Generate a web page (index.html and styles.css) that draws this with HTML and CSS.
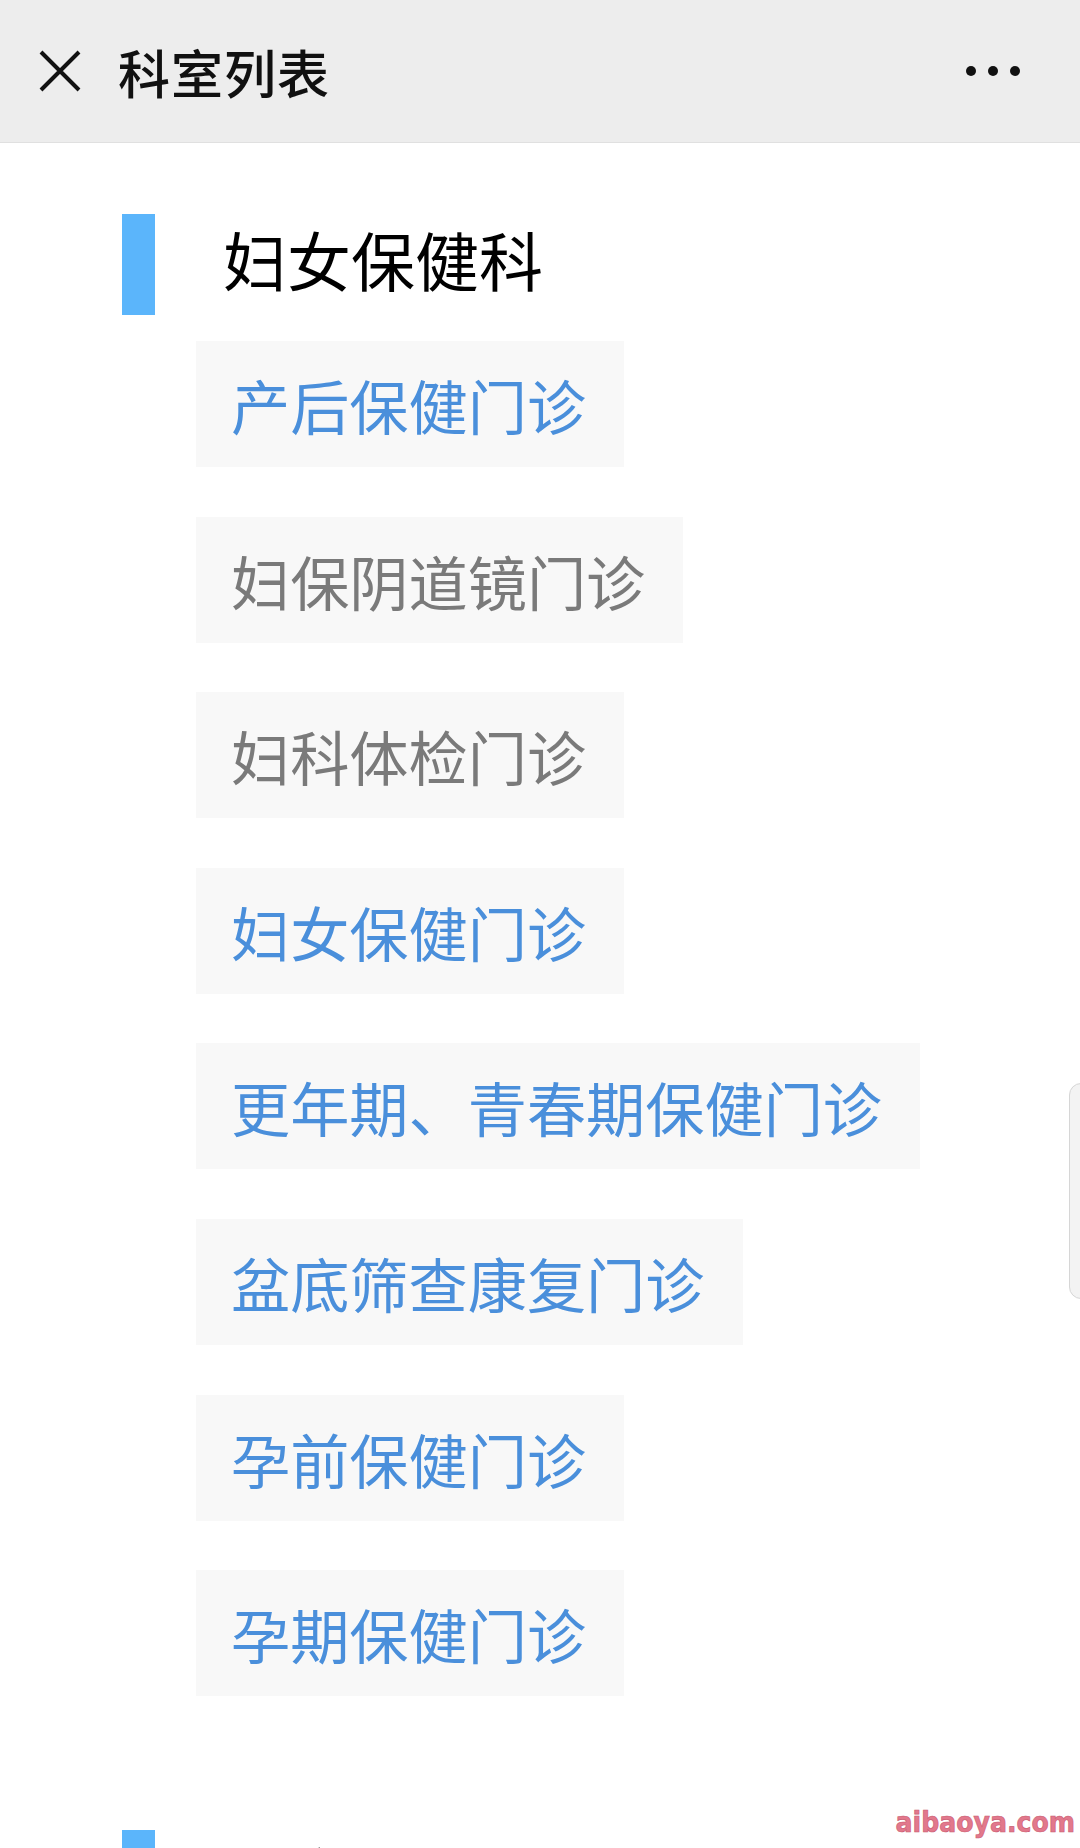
FILE: index.html
```html
<!DOCTYPE html>
<html lang="zh-CN">
<head>
  <meta charset="UTF-8">
  <title>科室列表</title>
  <link rel="stylesheet" href="styles.css">
</head>
<body>
  <div class="topbar">
    <span class="close">
      <svg width="42" height="42" viewBox="0 0 42 42"><path d="M2 2 L40 40 M40 2 L2 40" stroke="#111" stroke-width="4" fill="none"/></svg>
    </span>
    <span class="topbar-title">科室列表</span>
    <span class="more"><i></i><i></i><i></i></span>
  </div>

  <div class="lista">
    <div class="seccion">
      <div class="seccion-head">
        <span class="barra"></span>
        <h2>妇女保健科</h2>
      </div>
      <div class="items">
        <div class="item activo">产后保健门诊</div>
        <div class="item">妇保阴道镜门诊</div>
        <div class="item">妇科体检门诊</div>
        <div class="item activo">妇女保健门诊</div>
        <div class="item activo">更年期、青春期保健门诊</div>
        <div class="item activo">盆底筛查康复门诊</div>
        <div class="item activo">孕前保健门诊</div>
        <div class="item activo">孕期保健门诊</div>
      </div>
    </div>

    <div class="seccion">
      <div class="seccion-head">
        <span class="barra"></span>
        <h2>儿童保健科</h2>
      </div>
    </div>
  </div>

  <div class="scroll"></div>
  <div class="marca">aibaoya.com</div>
</body>
</html>
```

FILE: styles.css
```css
body {
  margin: 0;
  background: #fff;
  font-family: "Noto Sans CJK SC", "Noto Sans", sans-serif;
  height: 1848px;
  overflow: hidden;
}
.topbar {
  height: 142px;
  background: #ededed;
  border-bottom: 1px solid #e0e0e0;
  display: flex;
  align-items: center;
  padding: 0 0 0 39px;
}
.close {
  width: 42px;
  height: 42px;
  display: flex;
}
.topbar-title {
  margin-left: 37px;
  font-size: 52px;
  font-weight: 500;
  color: #111;
  letter-spacing: 1px;
}
.more {
  margin-left: auto;
  margin-right: 60px;
  display: flex;
  gap: 12px;
}
.more i {
  width: 10px;
  height: 10px;
  border-radius: 50%;
  background: #111;
}
.lista {
  padding: 71px 0 0 122px;
}
.seccion-head {
  display: flex;
  align-items: center;
  height: 101px;
}
.barra {
  width: 33px;
  height: 101px;
  background: #5bb5fb;
}
.seccion h2 {
  margin: 0 0 14px 68px;
  font-size: 64px;
  font-weight: 400;
  color: #000;
}
.items {
  display: flex;
  flex-direction: column;
  align-items: flex-start;
  gap: 49.6px;
  padding: 26px 0 134px 74px;
}
.item {
  height: 126px;
  line-height: 126px;
  padding: 0 38px 0 35px;
  background: #f8f8f8;
  font-size: 59.2px;
  color: #7a7a7a;
}
.item.activo {
  color: #4a8fdb;
}
.scroll {
  position: absolute;
  left: 1069px;
  top: 1083px;
  width: 30px;
  height: 214px;
  background: #f3f3f3;
  border: 1px solid #d6d6d6;
  border-radius: 12px;
}
.marca {
  position: absolute;
  right: 5px;
  top: 1806px;
  font-family: "DejaVu Sans Condensed", "DejaVu Sans", sans-serif;
  font-stretch: condensed;
  font-weight: 700;
  font-size: 28px;
  color: #e2788c;
  -webkit-text-stroke: 0.6px #c95a70;
  text-shadow: 0 0 2px #fff;
}
```
